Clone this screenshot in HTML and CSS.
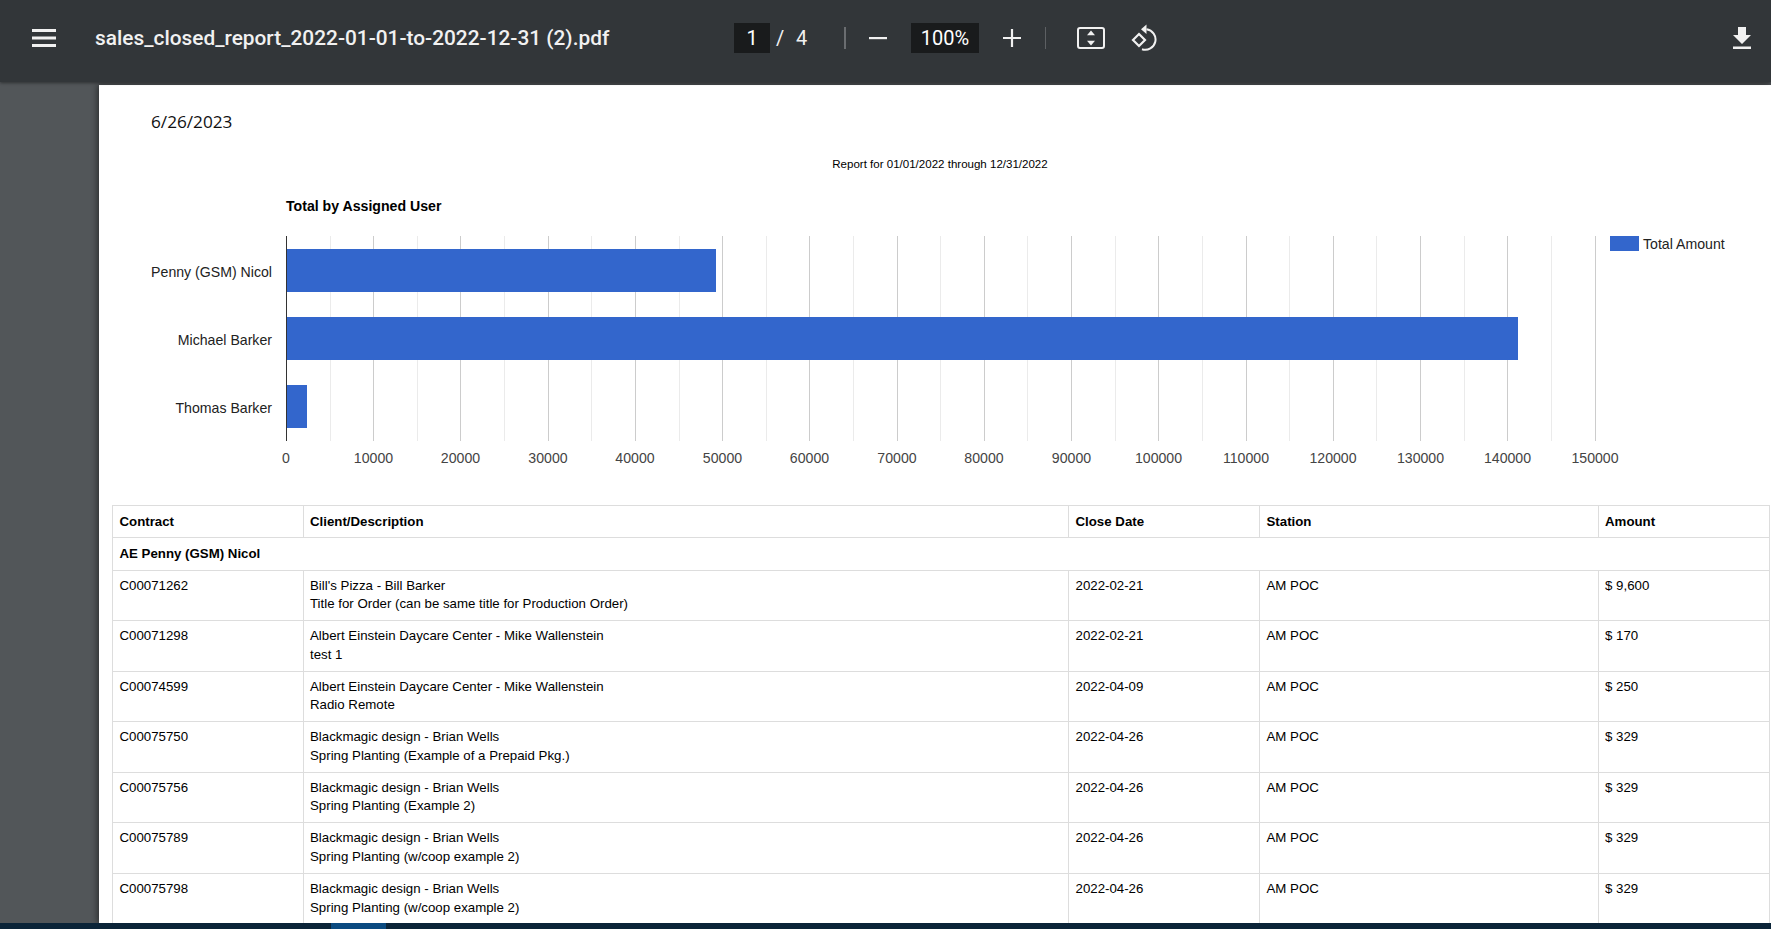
FILE: index.html
```html
<!DOCTYPE html>
<html lang="en">
<head>
<meta charset="utf-8">
<title>sales_closed_report_2022-01-01-to-2022-12-31 (2).pdf</title>
<link rel="stylesheet" href="styles.css">
</head>
<body>
<div class="app">
  <header class="toolbar">
    <svg class="icon-menu" viewBox="0 0 24 18"><path d="M0 0h24v3H0zM0 7.5h24v3H0zM0 15h24v3H0z"/></svg>
    <div class="filename">sales_closed_report_2022-01-01-to-2022-12-31 (2).pdf</div>
    <div class="page-box">1</div>
    <span class="slash">/</span>
    <span class="total">4</span>
    <span class="divider first"></span>
    <svg class="icon-minus" viewBox="0 0 18 18"><path d="M0 8h18v2.2H0z"/></svg>
    <div class="zoom-box">100%</div>
    <svg class="icon-plus" viewBox="0 0 18 18"><path d="M7.9 0h2.2v7.9H18v2.2h-7.9V18H7.9v-7.9H0V7.9h7.9z"/></svg>
    <span class="divider second"></span>
    <svg class="icon-fit" viewBox="0 0 28 22"><rect x="1" y="1" width="26" height="20" rx="2" fill="none" stroke="#f1f1f1" stroke-width="2"/><path d="M14 3.500l4 4.800h-8zM14 18.500l-4-4.800h8z"/></svg>
    <svg class="icon-rotate" viewBox="0 0 27 28"><path d="M8 11l6 6-6 6-6-6z" fill="none" stroke="#f1f1f1" stroke-width="2.200"/><path d="M15.500 6.300A10.300 10.300 0 1 1 11 26.300" fill="none" stroke="#f1f1f1" stroke-width="2"/><path d="M15.500 1.500v9.600L10 6.300z"/></svg>
    <svg class="icon-download" viewBox="0 0 18 22"><path d="M5 0h8v8h5l-9 9-9-9h5zM0 19.600h18V22H0z"/></svg>
  </header>
  <main class="viewer">
    <article class="page">
      <div class="date">6/26/2023</div>
      <div class="report-for">Report for 01/01/2022 through 12/31/2022</div>
      <svg class="chart" viewBox="0 0 1672 315" xmlns="http://www.w3.org/2000/svg">
        <g transform="translate(-99 -190)">
          <text class="chart-title" x="286" y="211">Total by Assigned User</text>
          <g class="minor">
            <path d="M330.500 236V441M417.500 236V441M504.500 236V441M591.500 236V441M679.500 236V441M766.500 236V441M853.500 236V441M940.500 236V441M1027.500 236V441M1115.500 236V441M1202.500 236V441M1289.500 236V441M1376.500 236V441M1464.500 236V441M1551.500 236V441"/>
          </g>
          <g class="major">
            <path d="M373.500 236V441M460.500 236V441M548.500 236V441M635.500 236V441M722.500 236V441M809.500 236V441M897.500 236V441M984.500 236V441M1071.500 236V441M1158.500 236V441M1246.500 236V441M1333.500 236V441M1420.500 236V441M1507.500 236V441M1595.500 236V441"/>
          </g>
          <rect class="bar" x="287" y="249" width="429" height="43"/>
          <rect class="bar" x="287" y="317" width="1231" height="43"/>
          <rect class="bar" x="287" y="385" width="20" height="43"/>
          <path class="axis" d="M286.500 236V441"/>
          <g class="y-labels">
            <text x="272" y="277">Penny (GSM) Nicol</text>
            <text x="272" y="345">Michael Barker</text>
            <text x="272" y="413">Thomas Barker</text>
          </g>
          <g class="x-labels">
            <text x="286" y="463">0</text><text x="373.500" y="463">10000</text><text x="460.500" y="463">20000</text><text x="548" y="463">30000</text><text x="635" y="463">40000</text><text x="722.500" y="463">50000</text><text x="809.500" y="463">60000</text><text x="897" y="463">70000</text><text x="984" y="463">80000</text><text x="1071.500" y="463">90000</text><text x="1158.500" y="463">100000</text><text x="1246" y="463">110000</text><text x="1333" y="463">120000</text><text x="1420.500" y="463">130000</text><text x="1507.500" y="463">140000</text><text x="1595" y="463">150000</text>
          </g>
          <rect class="bar" x="1610" y="236" width="29" height="15"/>
          <text class="legend" x="1643" y="249">Total Amount</text>
        </g>
      </svg>
      <table class="report">
        <colgroup><col class="c1"><col class="c2"><col class="c3"><col class="c4"><col class="c5"></colgroup>
        <thead>
          <tr><th>Contract</th><th>Client/Description</th><th>Close Date</th><th>Station</th><th>Amount</th></tr>
        </thead>
        <tbody>
          <tr class="group"><th colspan="5">AE Penny (GSM) Nicol</th></tr>
          <tr><td>C00071262</td><td>Bill's Pizza - Bill Barker<br>Title for Order (can be same title for Production Order)</td><td>2022-02-21</td><td>AM POC</td><td>$ 9,600</td></tr>
          <tr><td>C00071298</td><td>Albert Einstein Daycare Center - Mike Wallenstein<br>test 1</td><td>2022-02-21</td><td>AM POC</td><td>$ 170</td></tr>
          <tr><td>C00074599</td><td>Albert Einstein Daycare Center - Mike Wallenstein<br>Radio Remote</td><td>2022-04-09</td><td>AM POC</td><td>$ 250</td></tr>
          <tr><td>C00075750</td><td>Blackmagic design - Brian Wells<br>Spring Planting (Example of a Prepaid Pkg.)</td><td>2022-04-26</td><td>AM POC</td><td>$ 329</td></tr>
          <tr><td>C00075756</td><td>Blackmagic design - Brian Wells<br>Spring Planting (Example 2)</td><td>2022-04-26</td><td>AM POC</td><td>$ 329</td></tr>
          <tr><td>C00075789</td><td>Blackmagic design - Brian Wells<br>Spring Planting (w/coop example 2)</td><td>2022-04-26</td><td>AM POC</td><td>$ 329</td></tr>
          <tr><td>C00075798</td><td>Blackmagic design - Brian Wells<br>Spring Planting (w/coop example 2)</td><td>2022-04-26</td><td>AM POC</td><td>$ 329</td></tr>
        </tbody>
      </table>
    </article>
  </main>
  <div class="taskbar"><span class="task-active"></span></div>
</div>
</body>
</html>
```
FILE: styles.css
```css
* { box-sizing: border-box; }
html, body { margin: 0; height: 100%; overflow: hidden; }
body { font-family: "Liberation Sans", Arial, sans-serif; background: #525659; }
.app { display: flex; flex-direction: column; width: 1771px; height: 929px; }

.toolbar {
  position: relative; z-index: 2;
  flex: 0 0 82px; display: flex; align-items: center;
  background: #323639; color: #f1f1f1;
  padding-left: 32px;
  font-family: Roboto, sans-serif;
  box-shadow: 0 1px 3px rgba(0,0,0,.45);
}
.toolbar svg { fill: #f1f1f1; flex: none; display: block; }
.icon-menu { width: 24px; height: 18px; margin: -6px 39px 0 0; }
.filename { width: 639px; font-size: 20.850px; font-weight: 500; margin-top: -6px; white-space: nowrap; }
.page-box, .zoom-box {
  background: #191b1c; height: 30px; line-height: 30px; text-align: center;
  font-size: 20px; color: #fff; margin-top: -6px;
}
.page-box { width: 36px; }
.slash { margin: -6px 0 0 6px; width: 20px; font-size: 20px; }
.total { margin-top: -6px; width: 48px; font-size: 20px; }
.divider { width: 2px; height: 22px; background: #6a6d70; margin-top: -6px; }
.divider.second { width: 1px; background: #5d6063; }
.icon-minus { width: 18px; height: 18px; margin: -6px 24px 0 23px; }
.zoom-box { width: 68px; }
.icon-plus { width: 18px; height: 18px; margin: -6px 24px 0 24px; }
.icon-fit { width: 28px; height: 22px; margin: -6px 26px 0 31px; }
.icon-rotate { width: 27px; height: 28px; margin: -8px 575px 0 0; }
.icon-download { width: 18px; height: 22px; margin-top: -7px; }

.viewer { flex: 1; min-height: 0; padding-left: 99px; padding-top: 3px; }
.page {
  position: relative; height: 838px; background: #fff; overflow: hidden;
  box-shadow: -2px 0 6px rgba(0,0,0,.45);
  padding-top: 27px;
}
.date { font-family: "Open Sans", sans-serif; font-size: 17.200px; line-height: 20px; margin-left: 52px; color: #111; }
.report-for { font-size: 11.540px; line-height: 14px; text-align: center; color: #000; margin: 25px 0 0 0; padding-left: 10px; }
.chart { display: block; width: 1672px; height: 315px; margin-top: 19px; }
.chart text { font-family: "Liberation Sans", Arial, sans-serif; font-size: 14.130px; }
.chart-title { font-weight: 700; fill: #000; }
.minor path { stroke: #ebebeb; fill: none; }
.major path { stroke: #cccccc; fill: none; }
.axis { stroke: #333; fill: none; }
.bar { fill: #3366cc; }
.y-labels text { text-anchor: end; fill: #222; }
.x-labels text { text-anchor: middle; fill: #444; }
.legend { fill: #222; }

.report {
  margin-left: 13px; width: 1657px; table-layout: fixed; border-collapse: collapse;
  font-size: 13.280px; line-height: 18.5px; color: #000;
}
.c1 { width: 190.500px; } .c2 { width: 765.500px; } .c3 { width: 191px; } .c4 { width: 338.500px; } .c5 { width: 171.500px; }
.report th, .report td { border: 1.5px solid #ddd; text-align: left; vertical-align: top; padding: 6px 6px 6px 6.500px; font-weight: 400; }
.report th { font-weight: 700; padding-top: 6.500px; }
.report thead th { height: 32px; }
.report .group th { height: 32.500px; }
.report tbody td { height: 50.600px; }

.taskbar { flex: 0 0 6px; background: #0b2438; padding-left: 331px; position: relative; z-index: 3; }
.task-active { display: block; width: 55px; height: 6px; background: #0b4a80; }
```
